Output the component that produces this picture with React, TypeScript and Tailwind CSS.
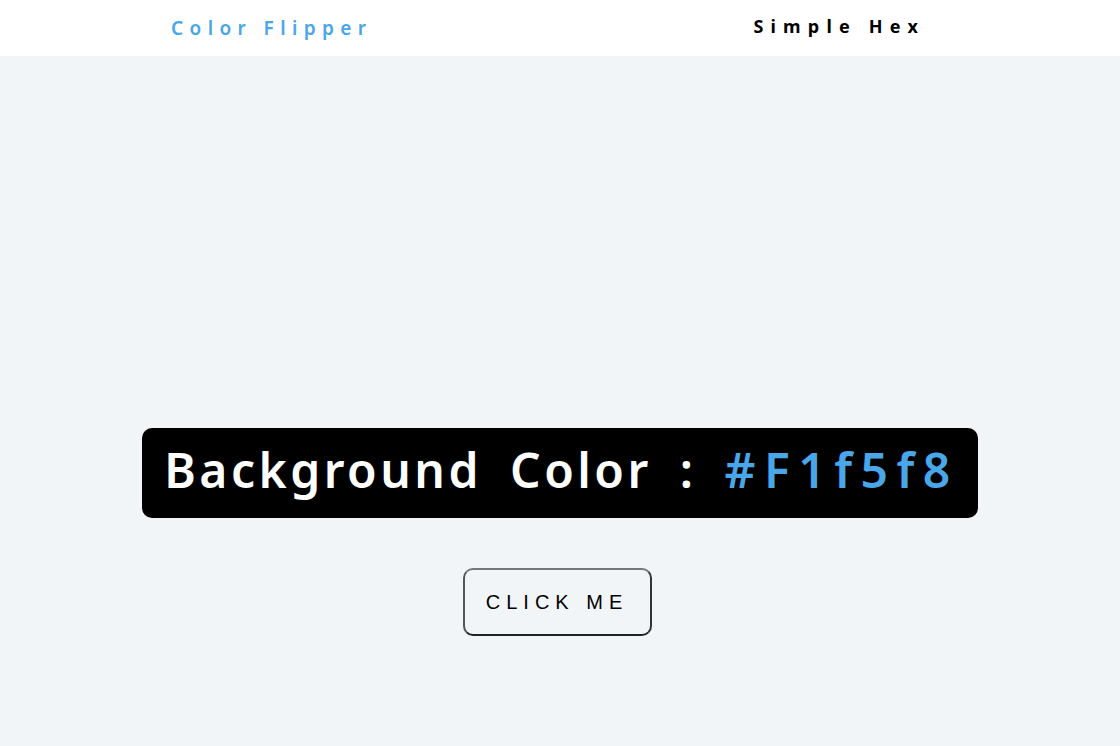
export default function App() {
  return (
    <div className="min-h-[746px] bg-[#f1f5f8] flex flex-col" style={{ fontFamily: '"Noto Sans", "Open Sans", sans-serif' }}>
      {/* header */}
      <nav className="h-14 bg-white flex items-center justify-between pl-[171px] pr-[195px]">
        <h4 className="text-[19px] font-semibold tracking-[6.4px] text-[#49a6e9] pt-[1px]">Color Flipper</h4>
        <ul className="flex gap-6">
          <li className="text-[18px] font-bold tracking-[7.2px] text-black -mt-[3px]">Simple Hex</li>
        </ul>
      </nav>

      {/* main */}
      <main className="flex-1 flex flex-col items-center justify-end pb-[110px]">
        <h2 className="bg-black text-white rounded-[10px] pl-[22px] pr-[19px] h-[90px] text-[48px] font-semibold tracking-[3.5px] [word-spacing:12px] leading-[84px] whitespace-pre">
          Background Color : <span className="tracking-[8.5px] text-[#49a6e9]">#F1f5f8</span>
        </h2>
        <button
          className="mt-[50px] mr-[6px] w-[189px] h-[68px] bg-transparent rounded-[10px] border-2 border-t-[#777] border-l-[#555] border-r-[#333] border-b-[#222] text-black text-[20px] uppercase tracking-[6px]"
          style={{ fontFamily: '"Liberation Sans", Arial, sans-serif' }}
        >
          Click Me
        </button>
      </main>
    </div>
  )
}
